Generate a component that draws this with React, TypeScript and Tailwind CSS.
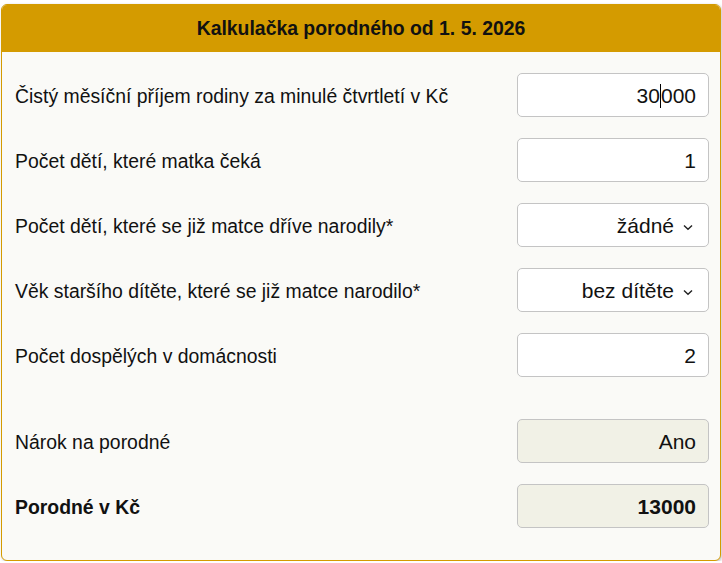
import React from "react";

const Chevron = () => (
  <svg width="10" height="7" viewBox="0 0 10 7" className="ml-[9px] mt-[3px]">
    <path d="M1 1.5 L5 5.3 L9 1.5" fill="none" stroke="#222" strokeWidth="1.4" />
  </svg>
);

function Row({ label, children, bold }: { label: string; children: React.ReactNode; bold?: boolean }) {
  return (
    <div className="flex items-center justify-between h-[44px]">
      <span className={"text-[19.4px] text-[#111] pt-[3px] " + (bold ? "font-bold" : "")}>{label}</span>
      {children}
    </div>
  );
}

const boxBase =
  "w-[192px] h-[44px] rounded-[5px] border border-[#c4c4c4] flex items-center justify-end pr-[12px] pt-[1px] text-[21px] text-[#111]";

export default function App() {
  return (
    <div className="pt-[4px] pl-[1px]" style={{ fontFamily: '"Liberation Sans", Arial, sans-serif' }}>
      <div className="w-[720px] h-[557px] rounded-[6px] border border-[#d49b00] bg-[#fafaf7] overflow-hidden shadow-[1px_1px_3px_rgba(0,0,0,0.25)]">
        <div className="h-[47px] bg-[#d49b00] flex items-center justify-center">
          <span className="text-[19.4px] font-bold text-[#111] pt-[1px]">Kalkulačka porodného od 1. 5. 2026</span>
        </div>
        <div className="pl-[13px] pr-[11px] pt-[21px] flex flex-col gap-[21px]">
          <Row label="Čistý měsíční příjem rodiny za minulé čtvrtletí v Kč">
            <div className={boxBase + " bg-white"}>
              30<span className="inline-block w-[1px] h-[24px] bg-black" />000
            </div>
          </Row>
          <Row label="Počet dětí, které matka čeká">
            <div className={boxBase + " bg-white"}>1</div>
          </Row>
          <Row label="Počet dětí, které se již matce dříve narodily*">
            <div className={boxBase + " bg-white pr-[15px]"}>
              žádné
              <Chevron />
            </div>
          </Row>
          <Row label="Věk staršího dítěte, které se již matce narodilo*">
            <div className={boxBase + " bg-white pr-[15px]"}>
              bez dítěte
              <Chevron />
            </div>
          </Row>
          <Row label="Počet dospělých v domácnosti">
            <div className={boxBase + " bg-white"}>2</div>
          </Row>
          <div className="mt-[21px]">
            <Row label="Nárok na porodné">
              <div className={boxBase + " bg-[#f1f1e6]"}>Ano</div>
            </Row>
          </div>
          <Row label="Porodné v Kč" bold>
            <div className={boxBase + " bg-[#f1f1e6] font-bold"}>13000</div>
          </Row>
        </div>
      </div>
    </div>
  );
}
